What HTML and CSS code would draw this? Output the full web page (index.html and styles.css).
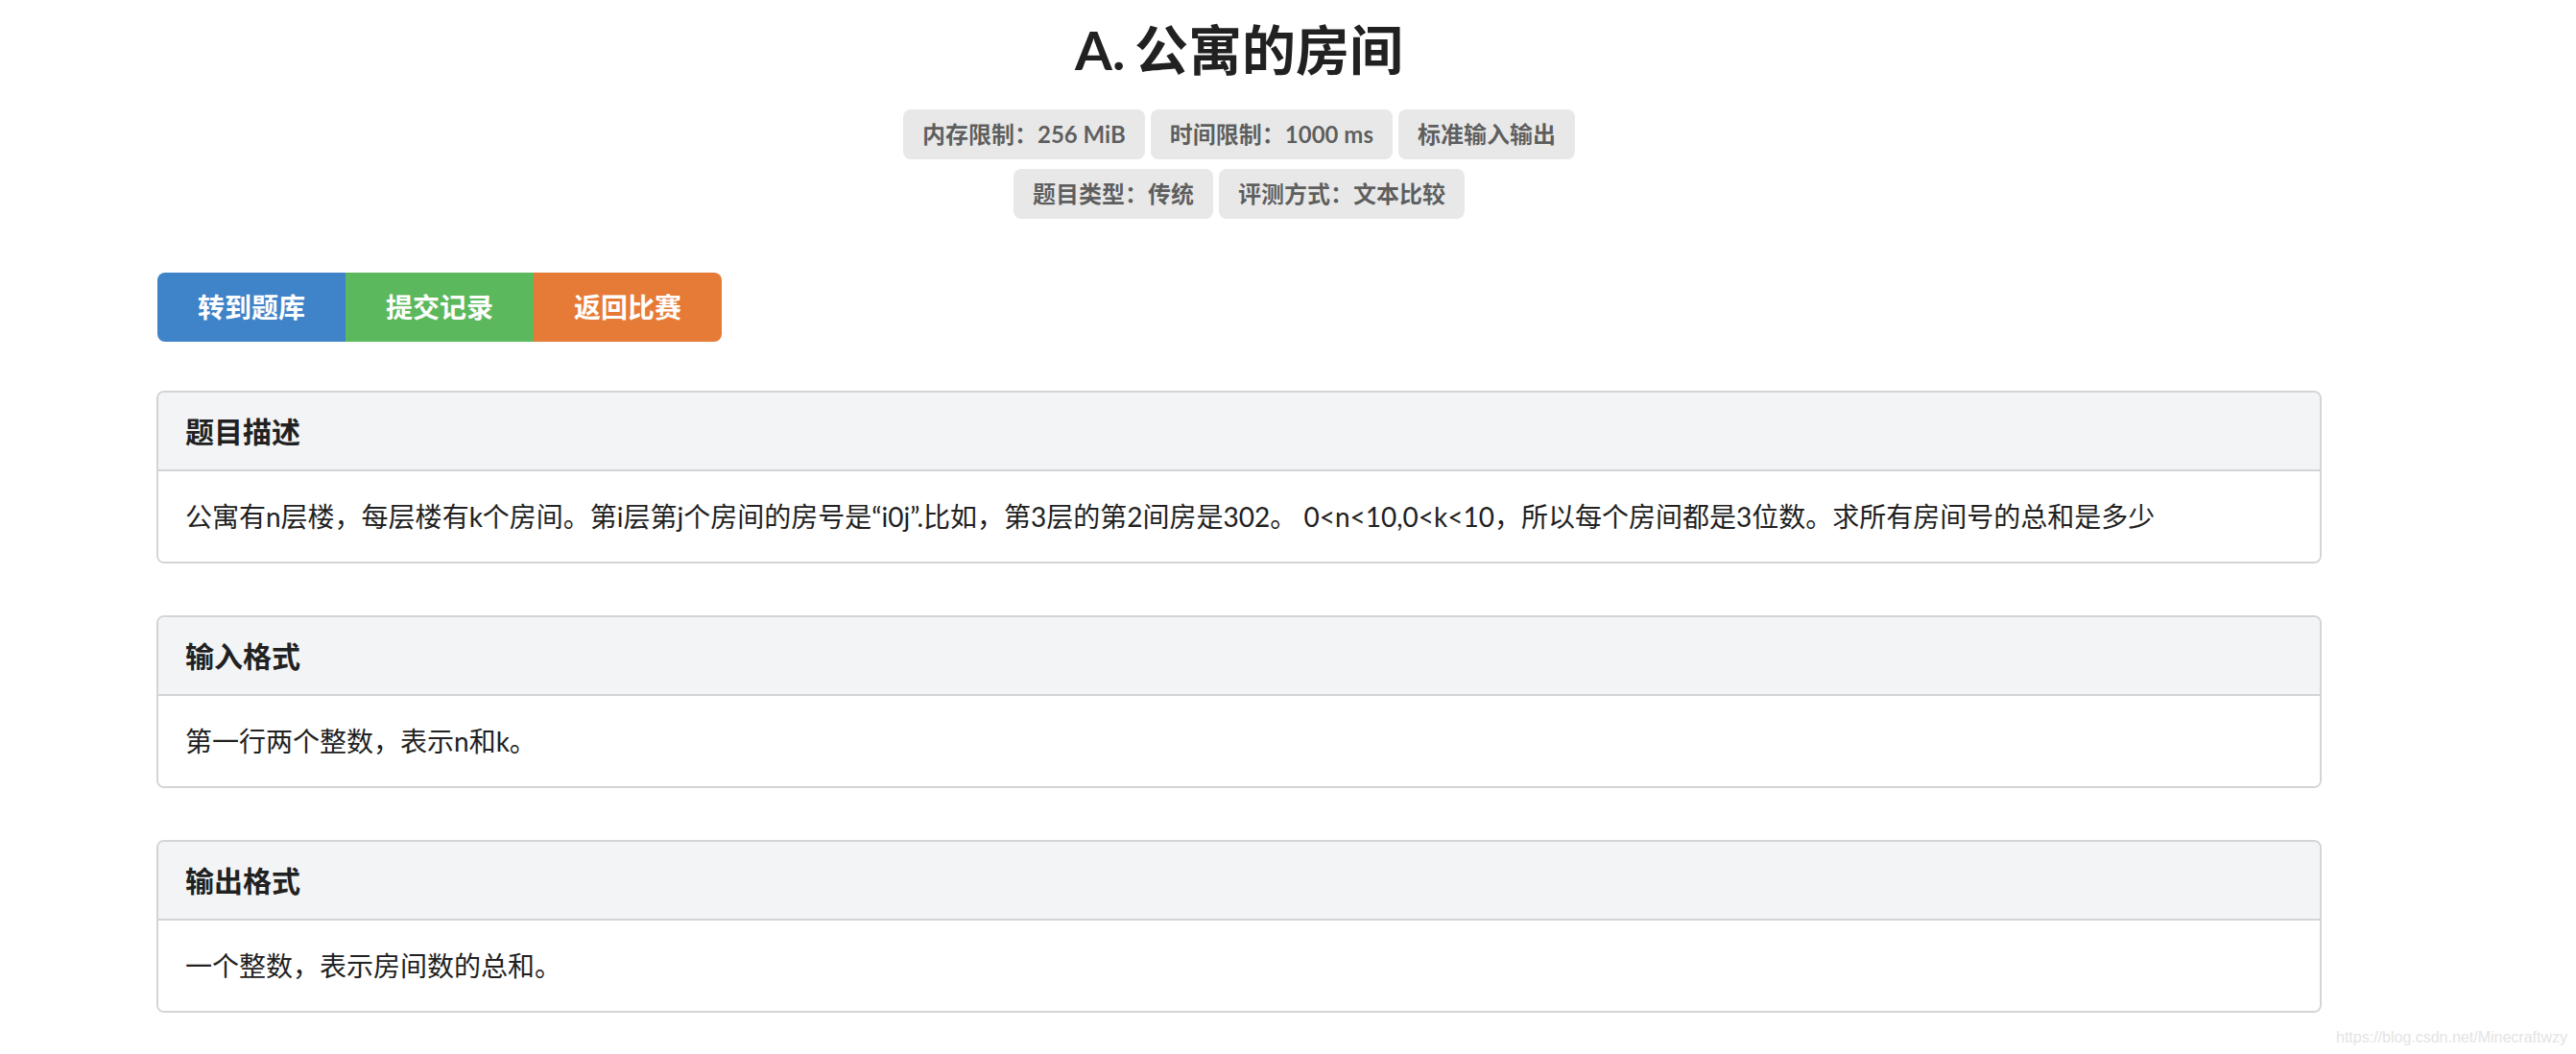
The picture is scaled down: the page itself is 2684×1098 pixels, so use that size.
FILE: index.html
```html
<!DOCTYPE html>
<html lang="zh-CN">
<head>
<meta charset="utf-8">
<title>A. 公寓的房间</title>
<link rel="stylesheet" href="styles.css">
</head>
<body>
<div class="page">
  <h1 class="title">A. 公寓的房间</h1>
  <div class="labels">
    <div class="label-row">
      <span class="label">内存限制：256 MiB</span>
      <span class="label">时间限制：1000 ms</span>
      <span class="label">标准输入输出</span>
    </div>
    <div class="label-row">
      <span class="label">题目类型：传统</span>
      <span class="label">评测方式：文本比较</span>
    </div>
  </div>
  <div class="buttons">
    <a class="btn btn-blue">转到题库</a>
    <a class="btn btn-green">提交记录</a>
    <a class="btn btn-orange">返回比赛</a>
  </div>
  <section class="card">
    <div class="card-head">题目描述</div>
    <div class="card-body">公寓有n层楼，每层楼有k个房间。第i层第j个房间的房号是“i0j”.比如，第3层的第2间房是302。 0&lt;n&lt;10,0&lt;k&lt;10，所以每个房间都是3位数。求所有房间号的总和是多少</div>
  </section>
  <section class="card">
    <div class="card-head">输入格式</div>
    <div class="card-body">第一行两个整数，表示n和k。</div>
  </section>
  <section class="card">
    <div class="card-head">输出格式</div>
    <div class="card-body">一个整数，表示房间数的总和。</div>
  </section>
</div>
<div class="watermark">https://blog.csdn.net/Minecraftwzy</div>
</body>
</html>
```
FILE: styles.css
```css
html, body {
  margin: 0;
  padding: 0;
  background: #ffffff;
}
body {
  position: relative;
  height: 1098px;
  font-family: "Lato", "Noto Sans CJK SC", sans-serif;
  color: rgba(0, 0, 0, 0.87);
  overflow: hidden;
}
.page {
  width: 2256px;
  margin-left: 163px;
  padding-top: 16px;
}
.title {
  margin: 0;
  text-align: center;
  font-size: 56px;
  line-height: 72px;
  font-weight: 700;
  color: #212121;
  word-spacing: -4px;
}
.labels {
  margin-top: 26px;
  display: flex;
  flex-direction: column;
  align-items: center;
  gap: 10px;
}
.label-row {
  display: flex;
  justify-content: center;
  gap: 6px;
}
.label {
  display: inline-block;
  background: #e8e8e8;
  color: rgba(0, 0, 0, 0.6);
  font-size: 24px;
  line-height: 24px;
  font-weight: 700;
  padding: 14px 20px;
  border-radius: 8px;
  white-space: nowrap;
}
.buttons {
  display: flex;
  margin-top: 56px;
  margin-left: 1px;
}
.btn {
  display: block;
  width: 196px;
  text-align: center;
  color: #ffffff;
  font-size: 28px;
  line-height: 28px;
  font-weight: 700;
  padding: 22px 0;
}
.btn-blue {
  background: #3f83c9;
  border-radius: 8px 0 0 8px;
}
.btn-green {
  background: #5cb85c;
}
.btn-orange {
  background: #e67a37;
  border-radius: 0 8px 8px 0;
}
.card {
  margin-top: 54px;
  border: 2px solid #d4d4d5;
  border-radius: 8px;
  overflow: hidden;
}
.buttons + .card {
  margin-top: 51px;
}
.card-head {
  background: #f3f4f5;
  border-bottom: 2px solid #d4d4d5;
  padding: 22px 28px;
  font-size: 30px;
  line-height: 36px;
  font-weight: 700;
  color: #212121;
}
.card-body {
  padding: 27px 28px;
  font-size: 28px;
  line-height: 40px;
  color: #212121;
  background: #ffffff;
}
.watermark {
  position: absolute;
  right: 9px;
  top: 1071px;
  font-family: "Liberation Sans", Arial, sans-serif;
  font-size: 16px;
  line-height: 20px;
  color: #e4e4e4;
}
```
